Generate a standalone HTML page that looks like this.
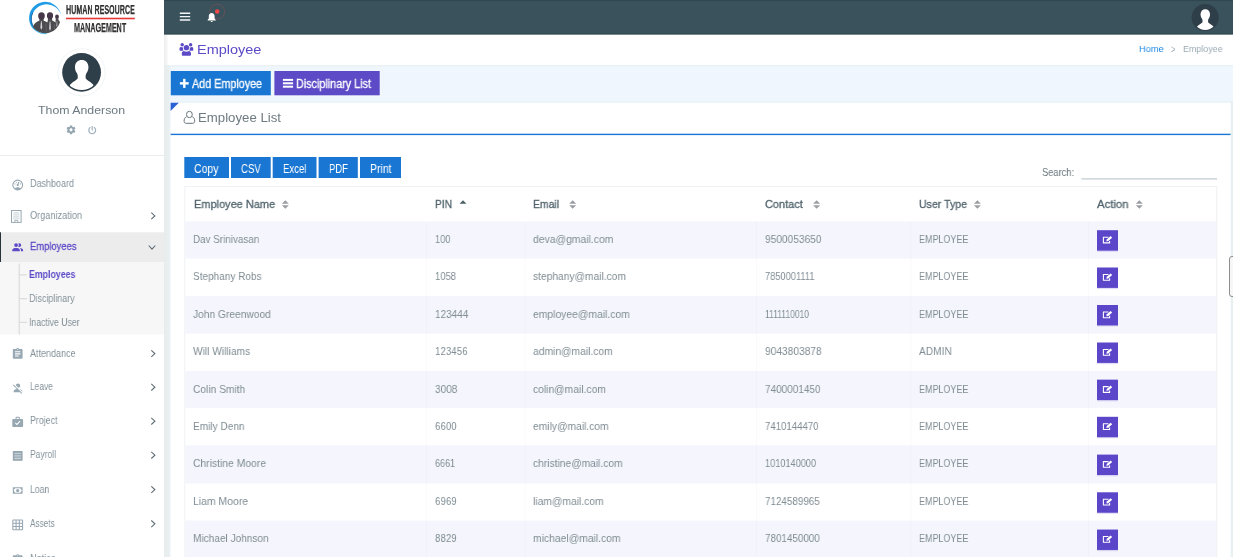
<!DOCTYPE html>
<html lang="en">
<head>
<meta charset="utf-8">
<title>Employee</title>
<style>
*{box-sizing:border-box;margin:0;padding:0}
html,body{width:1233px;height:557px;overflow:hidden}
body{font-family:"Liberation Sans",sans-serif;background:#eff6fd;color:#67757c;position:relative;font-size:12px}
div,svg{position:absolute}
.t{will-change:transform;position:absolute;white-space:pre;line-height:1;transform-origin:0 50%;display:block}

</style>
</head>
<body>
<svg style="left:0;top:0;width:1233px;height:557px" viewBox="0 0 1233 557">
<defs><linearGradient id="sh" x1="0" x2="1" y1="0" y2="0"><stop offset="0" stop-color="#979241" stop-opacity=".09"/><stop offset=".62" stop-color="#979241" stop-opacity=".075"/><stop offset="1" stop-color="#979241" stop-opacity="0"/></linearGradient><linearGradient id="sh2" x1="0" x2="1" y1="0" y2="0"><stop offset="0" stop-color="#000" stop-opacity=".07"/><stop offset=".6" stop-color="#000" stop-opacity=".04"/><stop offset="1" stop-color="#000" stop-opacity="0"/></linearGradient></defs>
<rect x="164" y="0" width="1069" height="34.7" fill="#39525b"/>
<rect x="164" y="0" width="1069" height="1" fill="#31474f"/>
<rect x="164" y="33.5" width="1069" height="1.2" fill="#2f464e"/>
<rect x="164" y="34.7" width="1069" height="30.3" fill="#fff"/>
<rect x="164" y="34.7" width="4.5" height="30.3" fill="url(#sh2)"/>
<rect x="164" y="65" width="7" height="493" fill="url(#sh)"/>
<rect x="0" y="0" width="164" height="557" fill="#fff"/>
<rect x="0" y="155" width="164" height="1" fill="#e9edf0"/>
<rect x="0" y="232.3" width="164" height="29.8" fill="#ececec"/>
<rect x="0" y="232.3" width="1" height="29.8" fill="#263238"/>
<rect x="0" y="262.1" width="164" height="72.4" fill="#f7f7f7"/>
<rect x="18.7" y="263.5" width="1" height="71" fill="#d6d6d6"/>
<rect x="19" y="274.4" width="8" height="1" fill="#d6d6d6"/>
<rect x="19" y="298.2" width="8" height="1" fill="#d6d6d6"/>
<rect x="19" y="321.8" width="8" height="1" fill="#d6d6d6"/>
<rect x="171" y="65" width="1062" height="1.5" fill="#e9f1f3" fill-opacity=".8"/>
<rect x="171" y="101.3" width="1060" height="1.5" fill="#e9f1f3" fill-opacity=".8"/>
<rect x="1230.8" y="101.3" width="2.2" height="460" fill="#e8eff1"/>
<rect x="170.8" y="71" width="100" height="24.3" fill="#1976d2"/>
<rect x="274.4" y="71" width="105.3" height="24.3" fill="#5c4ac7"/>
<rect x="170.6" y="102.8" width="1060" height="460" fill="#fff"/>
<path d="M170.6 102.8h8.2l-8.2 8.2z" fill="#2a62d6"/>
<rect x="170.6" y="133.7" width="1060" height="1.4" fill="#1976d2"/>
<rect x="184.3" y="157" width="44.7" height="21" fill="#1976d2"/>
<rect x="231" y="157" width="39.7" height="21" fill="#1976d2"/>
<rect x="272.7" y="157" width="43.8" height="21" fill="#1976d2"/>
<rect x="318.6" y="157" width="39.2" height="21" fill="#1976d2"/>
<rect x="360" y="157" width="41" height="21" fill="#1976d2"/>
<rect x="1081.4" y="178.4" width="135.6" height="1" fill="#b1bec4"/>
<rect x="184.8" y="186.5" width="1031.9" height="380" fill="#fff" stroke="#f0f1f4" stroke-width="1"/>
<rect x="185.3" y="221.3" width="1030.9" height="37.3" fill="#f5f6fd"/>
<rect x="185.3" y="295.9" width="1030.9" height="37.7" fill="#f5f6fd"/>
<rect x="185.3" y="370.9" width="1030.9" height="37" fill="#f5f6fd"/>
<rect x="185.3" y="445.2" width="1030.9" height="38.3" fill="#f5f6fd"/>
<rect x="185.3" y="520.6" width="1030.9" height="37.4" fill="#f5f6fd"/>
<rect x="426" y="221.3" width="1" height="345" fill="#788290" fill-opacity=".04"/>
<rect x="524.6" y="221.3" width="1" height="345" fill="#788290" fill-opacity=".04"/>
<rect x="756" y="221.3" width="1" height="345" fill="#788290" fill-opacity=".04"/>
<rect x="910.3" y="221.3" width="1" height="345" fill="#788290" fill-opacity=".04"/>
<rect x="1088" y="221.3" width="1" height="345" fill="#788290" fill-opacity=".04"/>
<rect x="1097" y="231.6" width="21" height="20.4" fill="#5b45c8" fill-opacity=".13" rx="1"/>
<rect x="1097" y="230.8" width="21" height="20.4" fill="#5b45c8" fill-opacity=".13"/>
<rect x="1097" y="230.2" width="21" height="20.4" fill="#5b45c8"/>
<rect x="1097" y="268.9" width="21" height="20.4" fill="#5b45c8" fill-opacity=".13" rx="1"/>
<rect x="1097" y="268.1" width="21" height="20.4" fill="#5b45c8" fill-opacity=".13"/>
<rect x="1097" y="267.5" width="21" height="20.4" fill="#5b45c8"/>
<rect x="1097" y="306.4" width="21" height="20.4" fill="#5b45c8" fill-opacity=".13" rx="1"/>
<rect x="1097" y="305.6" width="21" height="20.4" fill="#5b45c8" fill-opacity=".13"/>
<rect x="1097" y="305" width="21" height="20.4" fill="#5b45c8"/>
<rect x="1097" y="343.9" width="21" height="20.4" fill="#5b45c8" fill-opacity=".13" rx="1"/>
<rect x="1097" y="343.1" width="21" height="20.4" fill="#5b45c8" fill-opacity=".13"/>
<rect x="1097" y="342.5" width="21" height="20.4" fill="#5b45c8"/>
<rect x="1097" y="381.05" width="21" height="20.4" fill="#5b45c8" fill-opacity=".13" rx="1"/>
<rect x="1097" y="380.25" width="21" height="20.4" fill="#5b45c8" fill-opacity=".13"/>
<rect x="1097" y="379.65" width="21" height="20.4" fill="#5b45c8"/>
<rect x="1097" y="418.2" width="21" height="20.4" fill="#5b45c8" fill-opacity=".13" rx="1"/>
<rect x="1097" y="417.4" width="21" height="20.4" fill="#5b45c8" fill-opacity=".13"/>
<rect x="1097" y="416.8" width="21" height="20.4" fill="#5b45c8"/>
<rect x="1097" y="456" width="21" height="20.4" fill="#5b45c8" fill-opacity=".13" rx="1"/>
<rect x="1097" y="455.2" width="21" height="20.4" fill="#5b45c8" fill-opacity=".13"/>
<rect x="1097" y="454.6" width="21" height="20.4" fill="#5b45c8"/>
<rect x="1097" y="493.7" width="21" height="20.4" fill="#5b45c8" fill-opacity=".13" rx="1"/>
<rect x="1097" y="492.9" width="21" height="20.4" fill="#5b45c8" fill-opacity=".13"/>
<rect x="1097" y="492.3" width="21" height="20.4" fill="#5b45c8"/>
<rect x="1097" y="530.95" width="21" height="20.4" fill="#5b45c8" fill-opacity=".13" rx="1"/>
<rect x="1097" y="530.15" width="21" height="20.4" fill="#5b45c8" fill-opacity=".13"/>
<rect x="1097" y="529.55" width="21" height="20.4" fill="#5b45c8"/>
</svg>

<svg style="left:0;top:0;width:1233px;height:557px" viewBox="0 0 1233 557">
<rect x="66" y="17.7" width="68.8" height="1.6" fill="#e53935"/>
<rect x="179.9" y="82.15" width="8.8" height="2.4" fill="#fff"/>
<rect x="183.1" y="78.8" width="2.4" height="9.1" fill="#fff"/>
<rect x="282.9" y="78.9" width="10.2" height="2" fill="#fff"/>
<rect x="282.9" y="82.3" width="10.2" height="2" fill="#fff"/>
<rect x="282.9" y="85.7" width="10.2" height="2" fill="#fff"/>
</svg>
<!-- logo -->
<svg style="left:27px;top:0;width:38px;height:36px" viewBox="27 0 38 36">
<defs><clipPath id="lc"><circle cx="45.2" cy="17.9" r="15.3"/></clipPath></defs>
<path d="M61.1 15.6A16.1 16.1 0 1 0 46.5 34A14.9 14.9 0 1 1 61.1 15.6Z" fill="#1f9ce4"/>
<path d="M33 26.5A14.5 14.5 0 0 0 47 33.7" fill="none" stroke="#59c6f2" stroke-width="1"/>
<path d="M32.8 12.5A13.8 13.8 0 0 0 34.8 28.5" fill="none" stroke="#1d4f8c" stroke-width=".7"/>
<g clip-path="url(#lc)">
<path fill="#4b4b4f" d="M32.5 29C33 25 35.5 21.8 39.3 20.8L39.5 18H43.5L43.7 20.8C45.3 21.2 46.5 21.8 47.3 22.6L47.8 20.5L48 18H52L52.2 20.5C53.8 21 54.8 21.8 55.4 22.8L55.8 18.5H58.3L58.5 20C60.3 21.5 61 24.5 60.8 28C59 32 53 35 47 34.5C40 34.5 35 33 32.5 29Z"/>
<ellipse cx="41.5" cy="15.9" rx="3.3" ry="3.6" fill="#47374b"/>
<ellipse cx="50" cy="15.7" rx="3.1" ry="3.4" fill="#47374b"/>
<ellipse cx="57" cy="16.7" rx="1.9" ry="2.2" fill="#47374b"/>
<path d="M41 21.2l-.7 6.5 1.2 2 .8-2.2-.5-6.3zM49.6 21.5l-.5 7 .9 2.5 .9-2.5-.5-7zM56.8 21l-.4 4.5.5 1.5.5-1.5-.2-4.5z" fill="#cfcfd6"/>
<path d="M45.8 23.5l.6 9M54.3 24l.4 7" stroke="#77777c" stroke-width=".5"/>
</g>
</svg>
<!-- avatar sidebar -->
<svg style="left:56px;top:46px;width:52px;height:52px" viewBox="0 0 52 52">
<circle cx="25.6" cy="26.3" r="23.6" fill="none" stroke="#f1f5f7" stroke-width="1"/>
<defs><clipPath id="ac"><circle cx="25.6" cy="26.3" r="17.8"/></clipPath></defs>
<circle cx="25.6" cy="26.3" r="19.4" fill="#2f3f49"/>
<g clip-path="url(#ac)" fill="#fff">
<path d="M25.7 14.1C21.8 14.1 19.3 16.6 19 20.5C18.8 23 19.6 25.4 20.8 27C21.6 28.2 21.9 29.6 21.7 32.2C21.5 33.6 17.5 35.2 14.2 38.5L12 50H39.4L37.2 38.5C33.9 35.2 29.9 33.6 29.7 32.2C29.5 29.6 29.8 28.2 30.6 27C31.8 25.4 32.6 23 32.4 20.5C32.1 16.6 29.6 14.1 25.7 14.1Z"/>
</g>
</svg>
<!-- gear -->
<svg style="left:65px;top:124px;width:12px;height:12px" viewBox="-1.548 -1.121 26.916 26.916"><path fill="#94a5b0" d="M19.430 12.980c.040-.32.070-.64.070-.98s-.03-.66-.07-.98l2.110-1.650c.190-.15.240-.42.120-.64l-2-3.460c-.12-.22-.39-.3-.61-.22l-2.490 1c-.52-.4-1.080-.73-1.690-.98l-.38-2.650C14.460 2.180 14.250 2 14 2h-4c-.25 0-.46.180-.49.420l-.38 2.650c-.61.250-1.170.59-1.690.98l-2.490-1c-.23-.09-.49 0-.61.220l-2 3.460c-.13.220-.07.490.12.640l2.110 1.650c-.4.320-.7.650-.7.980s.3.660.7.980l-2.110 1.650c-.19.150-.24.420-.12.640l2 3.460c.12.220.39.3.61.220l2.490-1c.52.4 1.080.73 1.690.98l.38 2.650c.3.240.24.420.49.420h4c.25 0 .46-.18.490-.42l.38-2.650c.61-.25 1.170-.59 1.690-.98l2.490 1c.23.090.49 0 .61-.22l2-3.460c.12-.22.070-.49-.12-.64l-2.110-1.650zM12 15.5c-1.930 0-3.5-1.570-3.5-3.5s1.570-3.5 3.5-3.5 3.5 1.570 3.5 3.5-1.570 3.5-3.5 3.5z"/></svg>
<!-- power -->
<svg style="left:87px;top:124px;width:11px;height:11px" viewBox="0 0 11 11"><path d="M3.050 3.6A3.4 3.4 0 1 0 7.350 3.6" fill="none" stroke="#a3b3be" stroke-width="1.250" stroke-linecap="round"/><path d="M5.2 2.5V6.1" stroke="#a3b3be" stroke-width="1.2" stroke-linecap="round"/></svg>
<!-- sidebar menu icons -->
<svg style="left:11px;top:178px;width:14px;height:14px" viewBox="-0.369 -0.923 25.846 25.846"><path fill="#97a8b2" d="M12,2A10,10 0 0,0 2,12A10,10 0 0,0 12,22A10,10 0 0,0 22,12A10,10 0 0,0 12,2M12,4A8,8 0 0,1 20,12C20,14.4 19,16.5 17.3,18C15.9,16.7 14,16 12,16C10,16 8.2,16.7 6.7,18C5,16.5 4,14.4 4,12A8,8 0 0,1 12,4M14,5.89C13.62,5.9 13.26,6.15 13.1,6.54L11.81,9.77L11.71,10C11,10.13 10.41,10.6 10.14,11.26C9.73,12.29 10.23,13.45 11.26,13.86C12.29,14.27 13.45,13.77 13.86,12.74C14.12,12.08 14,11.32 13.57,10.76L13.67,10.5L14.96,7.29L14.97,7.26C15.17,6.75 14.92,6.17 14.41,5.96C14.28,5.91 14.15,5.89 14,5.89M10,6A1,1 0 0,0 9,7A1,1 0 0,0 10,8A1,1 0 0,0 11,7A1,1 0 0,0 10,6M7,9A1,1 0 0,0 6,10A1,1 0 0,0 7,11A1,1 0 0,0 8,10A1,1 0 0,0 7,9M17,9A1,1 0 0,0 16,10A1,1 0 0,0 17,11A1,1 0 0,0 18,10A1,1 0 0,0 17,9Z"/></svg>
<svg style="left:10px;top:209px;width:13px;height:15px" viewBox="0 0 13 15"><g fill="none" stroke="#97a8b2"><rect x="1.5" y="1.5" width="9.6" height="11.9" stroke-width="1"/><path stroke-width=".55" d="M3.3 3.9h6M3.3 5.9h6M3.3 7.9h6M3.3 9.9h6"/><path stroke-width=".8" d="M4.8 13.4v-1.9h3v1.9"/></g></svg>
<svg style="left:11px;top:241px;width:14px;height:13px" viewBox="-0.369 0 25.846 24"><path fill="#5c4ac7" d="M16 17V19H2V17S2 13 9 13 16 17 16 17M12.5 7.5A3.5 3.5 0 1 0 9 11A3.5 3.5 0 0 0 12.5 7.5M15.940 13A5.320 5.320 0 0 1 18 17V19H22V17S22 13.370 15.940 13M15 4A3.390 3.390 0 0 0 13.070 4.590A5 5 0 0 1 13.070 10.410A3.390 3.390 0 0 0 15 11A3.5 3.5 0 0 0 15 4Z"/></svg>
<svg style="left:11px;top:347px;width:14px;height:14px" viewBox="-0.369 -0.738 25.846 25.846"><path fill="#97a8b2" d="M17,9H7V7H17M17,13H7V11H17M14,17H7V15H14M12,3A1,1 0 0,1 13,4A1,1 0 0,1 12,5A1,1 0 0,1 11,4A1,1 0 0,1 12,3M19,3H14.820C14.4,1.840 13.3,1 12,1C10.7,1 9.6,1.840 9.180,3H5A2,2 0 0,0 3,5V19A2,2 0 0,0 5,21H19A2,2 0 0,0 21,19V5A2,2 0 0,0 19,3Z"/></svg>
<svg style="left:11px;top:381px;width:14px;height:14px" viewBox="-0.923 -0.738 25.846 25.846"><path fill="#97a8b2" d="M12,4A4,4 0 0,1 16,8C16,9.950 14.6,11.580 12.750,11.930L8.070,7.250C8.420,5.4 10.050,4 12,4M12.280,14L18.280,20L20,21.720L18.730,23L15.730,20H4V18C4,16.160 6.5,14.610 9.870,14.140L2.780,7.050L4.050,5.780L12.280,14M20,18V19.180L15.140,14.320C18,14.930 20,16.350 20,18Z"/></svg>
<svg style="left:11px;top:415px;width:14px;height:14px" viewBox="-0.369 -1.292 25.846 25.846"><path fill="#97a8b2" d="M10,2H14A2,2 0 0,1 16,4V6H20A2,2 0 0,1 22,8V19A2,2 0 0,1 20,21H4C2.890,21 2,20.1 2,19V8C2,6.890 2.890,6 4,6H8V4C8,2.890 8.890,2 10,2M14,6V4H10V6H14M10.5,17.5L17.090,10.910L15.680,9.5L10.5,14.670L8.410,12.590L7,14L10.5,17.5Z"/></svg>
<svg style="left:11px;top:449px;width:14px;height:14px" viewBox="-0.369 -0.738 25.846 25.846"><path fill="#97a8b2" d="M3 3h18v18H3z"/><path d="M6 6.5h12v2.2H6zM6 10.9h12v2.2H6zM6 15.3h12v2.2H6z" fill="#c9d2d7"/></svg>
<svg style="left:11px;top:484px;width:14px;height:13px" viewBox="-0.369 0 25.846 24"><path fill="#97a8b2" d="M3,6H21V18H3V6M12,9A3,3 0 0,1 15,12A3,3 0 0,1 12,15A3,3 0 0,1 9,12A3,3 0 0,1 12,9M7,8A2,2 0 0,1 5,10V14A2,2 0 0,1 7,16H17A2,2 0 0,1 19,14V10A2,2 0 0,1 17,8H7Z"/></svg>
<svg style="left:11px;top:518px;width:14px;height:14px" viewBox="-0.369 -0.738 25.846 25.846"><path fill="#97a8b2" d="M10,4V8H14V4H10M16,4V8H20V4H16M16,10V14H20V10H16M16,16V20H20V16H16M14,20V16H10V20H14M8,20V16H4V20H8M8,14V10H4V14H8M8,8V4H4V8H8M10,14H14V10H10V14M4,2H20A2,2 0 0,1 22,4V20A2,2 0 0,1 20,22H4C2.920,22 2,21.1 2,20V4A2,2 0 0,1 4,2Z"/></svg>
<svg style="left:11px;top:553px;width:14px;height:14px" viewBox="-0.369 -1.108 25.846 25.846"><path fill="#97a8b2" d="M19,3H14.820C14.4,1.840 13.3,1 12,1C10.7,1 9.6,1.840 9.180,3H5A2,2 0 0,0 3,5V19A2,2 0 0,0 5,21H19A2,2 0 0,0 21,19V5A2,2 0 0,0 19,3M12,3A1,1 0 0,1 13,4A1,1 0 0,1 12,5A1,1 0 0,1 11,4A1,1 0 0,1 12,3Z"/></svg>
<!-- chevrons -->
<svg style="left:148px;top:209px;width:10px;height:14px" viewBox="148 209 10 14"><path d="M151.3 212.6l3.6 3.3-3.6 3.3" fill="none" stroke="#5d6b73" stroke-width="1.1"/></svg>
<svg style="left:146px;top:242px;width:12px;height:10px" viewBox="146 242 12 10"><path d="M148.7 245.5l3.3 3.6 3.3-3.6" fill="none" stroke="#5d6b73" stroke-width="1.1"/></svg>
<svg style="left:148px;top:346px;width:10px;height:15px" viewBox="0 -0.6 10 15"><path d="M3.3 3.7l3.6 3.3-3.6 3.3" fill="none" stroke="#5d6b73" stroke-width="1.1"/></svg>
<svg style="left:148px;top:380px;width:10px;height:15px" viewBox="0 -0.2 10 15"><path d="M3.3 3.7l3.6 3.3-3.6 3.3" fill="none" stroke="#5d6b73" stroke-width="1.1"/></svg>
<svg style="left:148px;top:414px;width:10px;height:15px" viewBox="0 -0.2 10 15"><path d="M3.3 3.7l3.6 3.3-3.6 3.3" fill="none" stroke="#5d6b73" stroke-width="1.1"/></svg>
<svg style="left:148px;top:448px;width:10px;height:15px" viewBox="0 -0.2 10 15"><path d="M3.3 3.7l3.6 3.3-3.6 3.3" fill="none" stroke="#5d6b73" stroke-width="1.1"/></svg>
<svg style="left:148px;top:482px;width:10px;height:15px" viewBox="0 -0.6 10 15"><path d="M3.3 3.7l3.6 3.3-3.6 3.3" fill="none" stroke="#5d6b73" stroke-width="1.1"/></svg>
<svg style="left:148px;top:516px;width:10px;height:15px" viewBox="0 -0.8 10 15"><path d="M3.3 3.7l3.6 3.3-3.6 3.3" fill="none" stroke="#5d6b73" stroke-width="1.1"/></svg>
<!-- topbar icons -->
<svg style="left:178px;top:10px;width:14px;height:13px" viewBox="178 10 14 13"><path d="M179.8 13.2h10.4M179.8 16.6h10.4M179.8 19.9h10.4" stroke="#f4f6f7" stroke-width="1.450"/></svg>
<svg style="left:205px;top:2px;width:22px;height:22px" viewBox="205 2 22 22"><circle cx="217.2" cy="11.6" r="7.4" fill="none" stroke="#e8505a" stroke-opacity=".32" stroke-width=".8"/><path fill="#fff" d="M211.7 12.9c1.6 0 2.9 1.3 2.9 3.1v2.5l1.2 1.5v.5h-8.2v-.5l1.2-1.5v-2.5c0-1.8 1.3-3.1 2.9-3.1zM210.7 21h2c0 .6-.4 1-1 1s-1-.4-1-1z"/><circle cx="217.2" cy="11.6" r="2.250" fill="#f24848"/></svg>
<!-- topbar avatar -->
<svg style="left:1190px;top:2px;width:30px;height:30px" viewBox="1190 2 30 30">
<defs><clipPath id="tc"><circle cx="1205.2" cy="17.5" r="12.4"/></clipPath></defs>
<circle cx="1205.2" cy="17.5" r="13.6" fill="#2f3f49"/>
<g clip-path="url(#tc)" fill="#fff"><path transform="translate(1187.3 -.5) scale(.7)" d="M25.7 14.1C21.8 14.1 19.3 16.6 19 20.5C18.8 23 19.6 25.4 20.8 27C21.6 28.2 21.9 29.6 21.7 32.2C21.5 33.6 17.5 35.2 14.2 38.5L12 50H39.4L37.2 38.5C33.9 35.2 29.9 33.6 29.7 32.2C29.5 29.6 29.8 28.2 30.6 27C31.8 25.4 32.6 23 32.4 20.5C32.1 16.6 29.6 14.1 25.7 14.1Z"/></g>
</svg>
<!-- title icon (users) -->
<svg style="left:179px;top:42px;width:15px;height:14px" viewBox="-0.5 -0.9 15 14"><g fill="#5c4ac7">
<circle cx="2.7" cy="1.9" r="1.750"/><circle cx="11.1" cy="1.9" r="1.750"/>
<path d="M0 7.2V5.8C0 4.6.7 4 1.6 4c.5.5 1.4.7 2.2.3C3.3 5.4 3.4 6.6 4 7.6L3.2 7.9H.8C.3 7.9 0 7.6 0 7.2Z"/>
<path d="M13.8 7.2V5.8c0-1.2-.7-1.8-1.6-1.8-.5.5-1.4.7-2.2.3.5 1.1.4 2.3-.2 3.3l.8.3h2.4c.5 0 .8-.3.8-.7Z"/>
<circle cx="6.9" cy="4.8" r="2.650"/>
<path d="M2.3 11.6V10.6C2.3 9 3.3 8.1 4.5 8c1.4 1 3.4 1 4.8 0 1.2.1 2.2 1 2.2 2.6v1c0 .8-.5 1.3-1.3 1.3H3.6c-.8 0-1.3-.5-1.3-1.3Z"/>
</g></svg>
<!-- button icons -->
<!-- card header user icon -->
<svg style="left:182px;top:110px;width:14px;height:15px" viewBox="-0.9 -0.5 14 15"><g fill="none" stroke="#67757c" stroke-width="1"><ellipse cx="6.5" cy="4" rx="2.9" ry="3.2"/><path d="M3.6 6.3C1.8 7 1.2 8.7 1.2 10.8c0 1.3.8 2 2 2h6.6c1.2 0 2-.7 2-2 0-2.1-.6-3.8-2.4-4.5"/></g></svg>
<!-- sort icons -->
<svg style="left:281px;top:199px;width:8px;height:11px" viewBox="-0.8 -0.5 8 11"><path d="M0 4.2L3.5 .7 7 4.2Z" fill="#9b9fa3"/><path d="M0 5.8L3.5 9.3 7 5.8Z" fill="#9b9fa3"/></svg>
<svg style="left:459px;top:199px;width:8px;height:11px" viewBox="-0.5 -0.5 8 11"><path d="M0 4.2L3.5 .7 7 4.2Z" fill="#4d6069"/></svg>
<svg style="left:569px;top:199px;width:8px;height:11px" viewBox="-0.2 -0.5 8 11"><path d="M0 4.2L3.5 .7 7 4.2Z" fill="#9b9fa3"/><path d="M0 5.8L3.5 9.3 7 5.8Z" fill="#9b9fa3"/></svg>
<svg style="left:813px;top:199px;width:8px;height:11px" viewBox="-0.1 -0.5 8 11"><path d="M0 4.2L3.5 .7 7 4.2Z" fill="#9b9fa3"/><path d="M0 5.8L3.5 9.3 7 5.8Z" fill="#9b9fa3"/></svg>
<svg style="left:973px;top:199px;width:8px;height:11px" viewBox="-0.9 -0.5 8 11"><path d="M0 4.2L3.5 .7 7 4.2Z" fill="#9b9fa3"/><path d="M0 5.8L3.5 9.3 7 5.8Z" fill="#9b9fa3"/></svg>
<svg style="left:1135px;top:199px;width:8px;height:11px" viewBox="-0.8 -0.5 8 11"><path d="M0 4.2L3.5 .7 7 4.2Z" fill="#9b9fa3"/><path d="M0 5.8L3.5 9.3 7 5.8Z" fill="#9b9fa3"/></svg>
<!-- edit icons -->
<svg style="left:1102px;top:235px;width:12px;height:10px" viewBox="-0.3 -0.8 12 10"><path d="M6.2 1.4H1.1V7.1H7.3V5.2" fill="none" stroke="#fff" stroke-width="1.1"/><path d="M4 5.6L4.5 3.7 8.3.3 9.9 1.9 6 5.3Z" fill="#fff"/></svg>
<svg style="left:1102px;top:273px;width:12px;height:10px" viewBox="-0.3 -0.1 12 10"><path d="M6.2 1.4H1.1V7.1H7.3V5.2" fill="none" stroke="#fff" stroke-width="1.1"/><path d="M4 5.6L4.5 3.7 8.3.3 9.9 1.9 6 5.3Z" fill="#fff"/></svg>
<svg style="left:1102px;top:310px;width:12px;height:10px" viewBox="-0.3 -0.6 12 10"><path d="M6.2 1.4H1.1V7.1H7.3V5.2" fill="none" stroke="#fff" stroke-width="1.1"/><path d="M4 5.6L4.5 3.7 8.3.3 9.9 1.9 6 5.3Z" fill="#fff"/></svg>
<svg style="left:1102px;top:348px;width:12px;height:10px" viewBox="-0.3 -0.1 12 10"><path d="M6.2 1.4H1.1V7.1H7.3V5.2" fill="none" stroke="#fff" stroke-width="1.1"/><path d="M4 5.6L4.5 3.7 8.3.3 9.9 1.9 6 5.3Z" fill="#fff"/></svg>
<svg style="left:1102px;top:385px;width:12px;height:10px" viewBox="-0.3 -0.25 12 10"><path d="M6.2 1.4H1.1V7.1H7.3V5.2" fill="none" stroke="#fff" stroke-width="1.1"/><path d="M4 5.6L4.5 3.7 8.3.3 9.9 1.9 6 5.3Z" fill="#fff"/></svg>
<svg style="left:1102px;top:422px;width:12px;height:10px" viewBox="-0.3 -0.4 12 10"><path d="M6.2 1.4H1.1V7.1H7.3V5.2" fill="none" stroke="#fff" stroke-width="1.1"/><path d="M4 5.6L4.5 3.7 8.3.3 9.9 1.9 6 5.3Z" fill="#fff"/></svg>
<svg style="left:1102px;top:460px;width:12px;height:10px" viewBox="-0.3 -0.2 12 10"><path d="M6.2 1.4H1.1V7.1H7.3V5.2" fill="none" stroke="#fff" stroke-width="1.1"/><path d="M4 5.6L4.5 3.7 8.3.3 9.9 1.9 6 5.3Z" fill="#fff"/></svg>
<svg style="left:1102px;top:497px;width:12px;height:10px" viewBox="-0.3 -0.9 12 10"><path d="M6.2 1.4H1.1V7.1H7.3V5.2" fill="none" stroke="#fff" stroke-width="1.1"/><path d="M4 5.6L4.5 3.7 8.3.3 9.9 1.9 6 5.3Z" fill="#fff"/></svg>
<svg style="left:1102px;top:535px;width:12px;height:10px" viewBox="-0.3 -0.15 12 10"><path d="M6.2 1.4H1.1V7.1H7.3V5.2" fill="none" stroke="#fff" stroke-width="1.1"/><path d="M4 5.6L4.5 3.7 8.3.3 9.9 1.9 6 5.3Z" fill="#fff"/></svg>
<!-- right tab -->
<div style="left:1229.4px;top:256.4px;width:8px;height:41px;border:1px solid #8d8d8d;border-radius:3px 0 0 3px;background:#f7f7f7"></div>

<nav>
<span class="t" style="left:66.0px;top:3.6px;font-size:12.8px;color:#303030;transform:scaleX(0.556);font-weight:bold;-webkit-text-stroke:.25px currentColor">HUMAN RESOURCE</span>
<span class="t" style="left:73.7px;top:21.6px;font-size:12.3px;color:#303030;transform:scaleX(0.583);font-weight:bold;-webkit-text-stroke:.25px currentColor">MANAGEMENT</span>
<span class="t" style="left:38.1px;top:104.5px;font-size:11.3px;color:#6b7980;transform:scaleX(1.091)">Thom Anderson</span>
<span class="t" style="left:30.0px;top:178.2px;font-size:11px;color:#84929a;transform:scaleX(0.817)">Dashboard</span>
<span class="t" style="left:30.0px;top:210.3px;font-size:11px;color:#84929a;transform:scaleX(0.834)">Organization</span>
<span class="t" style="left:30.0px;top:241.0px;font-size:11.5px;color:#5c4ac7;transform:scaleX(0.816);-webkit-text-stroke:.3px currentColor">Employees</span>
<span class="t" style="left:29.0px;top:269.4px;font-size:11px;color:#5c4ac7;transform:scaleX(0.799);font-weight:bold">Employees</span>
<span class="t" style="left:29.0px;top:292.9px;font-size:11px;color:#84929a;transform:scaleX(0.811)">Disciplinary</span>
<span class="t" style="left:29.0px;top:316.6px;font-size:11px;color:#84929a;transform:scaleX(0.788)">Inactive User</span>
<span class="t" style="left:30.0px;top:347.6px;font-size:11px;color:#84929a;transform:scaleX(0.819)">Attendance</span>
<span class="t" style="left:30.0px;top:381.4px;font-size:11px;color:#84929a;transform:scaleX(0.767)">Leave</span>
<span class="t" style="left:30.0px;top:415.2px;font-size:11px;color:#84929a;transform:scaleX(0.803)">Project</span>
<span class="t" style="left:30.0px;top:449.2px;font-size:11px;color:#84929a;transform:scaleX(0.773)">Payroll</span>
<span class="t" style="left:30.0px;top:483.6px;font-size:11px;color:#84929a;transform:scaleX(0.792)">Loan</span>
<span class="t" style="left:30.0px;top:517.8px;font-size:11px;color:#84929a;transform:scaleX(0.748)">Assets</span>
<span class="t" style="left:30.0px;top:553.2px;font-size:11px;color:#84929a;transform:scaleX(0.830)">Notice</span>
</nav>
<header>
<span class="t" style="left:197.1px;top:43.2px;font-size:13px;color:#5c4ac7;transform:scaleX(1.114)">Employee</span>
<span class="t" style="left:1139.3px;top:44.2px;font-size:9.7px;color:#1e88e5;transform:scaleX(0.952)">Home</span>
<span class="t" style="left:1171.2px;top:43.9px;font-size:11px;color:#99abb4;transform:scaleX(0.683)">&gt;</span>
<span class="t" style="left:1182.6px;top:44.2px;font-size:9.7px;color:#99abb4;transform:scaleX(0.919)">Employee</span>
</header>
<main>
<span class="t" style="left:191.8px;top:77.7px;font-size:12px;color:#fff;transform:scaleX(0.898);-webkit-text-stroke:.3px currentColor">Add Employee</span>
<span class="t" style="left:296.3px;top:77.7px;font-size:12px;color:#fff;transform:scaleX(0.899);-webkit-text-stroke:.3px currentColor">Disciplinary List</span>
<span class="t" style="left:198.3px;top:112.0px;font-size:12px;color:#6d7a81;transform:scaleX(1.101)">Employee List</span>
<span class="t" style="left:194.2px;top:163.3px;font-size:12px;color:#fff;transform:scaleX(0.875)">Copy</span>
<span class="t" style="left:241.0px;top:163.3px;font-size:12px;color:#fff;transform:scaleX(0.798)">CSV</span>
<span class="t" style="left:283.0px;top:163.3px;font-size:12px;color:#fff;transform:scaleX(0.797)">Excel</span>
<span class="t" style="left:329.0px;top:163.3px;font-size:12px;color:#fff;transform:scaleX(0.783)">PDF</span>
<span class="t" style="left:369.8px;top:163.3px;font-size:12px;color:#fff;transform:scaleX(0.875)">Print</span>
<span class="t" style="left:1041.6px;top:166.6px;font-size:11.5px;color:#67757c;transform:scaleX(0.810)">Search:</span>
<span class="t" style="left:193.6px;top:198.2px;font-size:11.6px;color:#50636c;transform:scaleX(0.947);-webkit-text-stroke:.3px currentColor">Employee Name</span>
<span class="t" style="left:435.0px;top:198.2px;font-size:11.6px;color:#50636c;transform:scaleX(0.880);-webkit-text-stroke:.3px currentColor">PIN</span>
<span class="t" style="left:533.0px;top:198.2px;font-size:11.6px;color:#50636c;transform:scaleX(0.897);-webkit-text-stroke:.3px currentColor">Email</span>
<span class="t" style="left:765.0px;top:198.2px;font-size:11.6px;color:#50636c;transform:scaleX(0.946);-webkit-text-stroke:.3px currentColor">Contact</span>
<span class="t" style="left:918.8px;top:198.2px;font-size:11.6px;color:#50636c;transform:scaleX(0.912);-webkit-text-stroke:.3px currentColor">User Type</span>
<span class="t" style="left:1097.3px;top:198.2px;font-size:11.6px;color:#50636c;transform:scaleX(0.980);-webkit-text-stroke:.3px currentColor">Action</span>
<span class="t" style="left:193.4px;top:233.0px;font-size:11.6px;color:#7f8c93;transform:scaleX(0.851)">Dav Srinivasan</span>
<span class="t" style="left:435.2px;top:233.0px;font-size:11.6px;color:#7f8c93;transform:scaleX(0.796)">100</span>
<span class="t" style="left:533.3px;top:233.0px;font-size:11.6px;color:#7f8c93;transform:scaleX(0.896)">deva@gmail.com</span>
<span class="t" style="left:765.2px;top:233.0px;font-size:11.6px;color:#7f8c93;transform:scaleX(0.876)">9500053650</span>
<span class="t" style="left:919.0px;top:233.0px;font-size:11.6px;color:#7f8c93;transform:scaleX(0.774)">EMPLOYEE</span>
<span class="t" style="left:193.4px;top:270.4px;font-size:11.6px;color:#7f8c93;transform:scaleX(0.865)">Stephany Robs</span>
<span class="t" style="left:435.2px;top:270.4px;font-size:11.6px;color:#7f8c93;transform:scaleX(0.814)">1058</span>
<span class="t" style="left:533.3px;top:270.4px;font-size:11.6px;color:#7f8c93;transform:scaleX(0.884)">stephany@mail.com</span>
<span class="t" style="left:765.2px;top:270.4px;font-size:11.6px;color:#7f8c93;transform:scaleX(0.800)">7850001111</span>
<span class="t" style="left:919.0px;top:270.4px;font-size:11.6px;color:#7f8c93;transform:scaleX(0.774)">EMPLOYEE</span>
<span class="t" style="left:193.4px;top:307.8px;font-size:11.6px;color:#7f8c93;transform:scaleX(0.881)">John Greenwood</span>
<span class="t" style="left:435.2px;top:307.8px;font-size:11.6px;color:#7f8c93;transform:scaleX(0.861)">123444</span>
<span class="t" style="left:533.3px;top:307.8px;font-size:11.6px;color:#7f8c93;transform:scaleX(0.893)">employee@mail.com</span>
<span class="t" style="left:765.2px;top:307.8px;font-size:11.6px;color:#7f8c93;transform:scaleX(0.731)">1111110010</span>
<span class="t" style="left:919.0px;top:307.8px;font-size:11.6px;color:#7f8c93;transform:scaleX(0.774)">EMPLOYEE</span>
<span class="t" style="left:193.4px;top:345.2px;font-size:11.6px;color:#7f8c93;transform:scaleX(0.879)">Will Williams</span>
<span class="t" style="left:435.2px;top:345.2px;font-size:11.6px;color:#7f8c93;transform:scaleX(0.843)">123456</span>
<span class="t" style="left:533.3px;top:345.2px;font-size:11.6px;color:#7f8c93;transform:scaleX(0.889)">admin@mail.com</span>
<span class="t" style="left:765.2px;top:345.2px;font-size:11.6px;color:#7f8c93;transform:scaleX(0.879)">9043803878</span>
<span class="t" style="left:919.0px;top:345.2px;font-size:11.6px;color:#7f8c93;transform:scaleX(0.878)">ADMIN</span>
<span class="t" style="left:193.4px;top:382.6px;font-size:11.6px;color:#7f8c93;transform:scaleX(0.882)">Colin Smith</span>
<span class="t" style="left:435.2px;top:382.6px;font-size:11.6px;color:#7f8c93;transform:scaleX(0.868)">3008</span>
<span class="t" style="left:533.3px;top:382.6px;font-size:11.6px;color:#7f8c93;transform:scaleX(0.890)">colin@mail.com</span>
<span class="t" style="left:765.2px;top:382.6px;font-size:11.6px;color:#7f8c93;transform:scaleX(0.861)">7400001450</span>
<span class="t" style="left:919.0px;top:382.6px;font-size:11.6px;color:#7f8c93;transform:scaleX(0.774)">EMPLOYEE</span>
<span class="t" style="left:193.4px;top:420.0px;font-size:11.6px;color:#7f8c93;transform:scaleX(0.870)">Emily Denn</span>
<span class="t" style="left:435.2px;top:420.0px;font-size:11.6px;color:#7f8c93;transform:scaleX(0.841)">6600</span>
<span class="t" style="left:533.3px;top:420.0px;font-size:11.6px;color:#7f8c93;transform:scaleX(0.888)">emily@mail.com</span>
<span class="t" style="left:765.2px;top:420.0px;font-size:11.6px;color:#7f8c93;transform:scaleX(0.830)">7410144470</span>
<span class="t" style="left:919.0px;top:420.0px;font-size:11.6px;color:#7f8c93;transform:scaleX(0.774)">EMPLOYEE</span>
<span class="t" style="left:193.4px;top:457.4px;font-size:11.6px;color:#7f8c93;transform:scaleX(0.892)">Christine Moore</span>
<span class="t" style="left:435.2px;top:457.4px;font-size:11.6px;color:#7f8c93;transform:scaleX(0.779)">6661</span>
<span class="t" style="left:533.3px;top:457.4px;font-size:11.6px;color:#7f8c93;transform:scaleX(0.884)">christine@mail.com</span>
<span class="t" style="left:765.2px;top:457.4px;font-size:11.6px;color:#7f8c93;transform:scaleX(0.792)">1010140000</span>
<span class="t" style="left:919.0px;top:457.4px;font-size:11.6px;color:#7f8c93;transform:scaleX(0.774)">EMPLOYEE</span>
<span class="t" style="left:193.4px;top:494.8px;font-size:11.6px;color:#7f8c93;transform:scaleX(0.900)">Liam Moore</span>
<span class="t" style="left:435.2px;top:494.8px;font-size:11.6px;color:#7f8c93;transform:scaleX(0.841)">6969</span>
<span class="t" style="left:533.3px;top:494.8px;font-size:11.6px;color:#7f8c93;transform:scaleX(0.889)">liam@mail.com</span>
<span class="t" style="left:765.2px;top:494.8px;font-size:11.6px;color:#7f8c93;transform:scaleX(0.850)">7124589965</span>
<span class="t" style="left:919.0px;top:494.8px;font-size:11.6px;color:#7f8c93;transform:scaleX(0.774)">EMPLOYEE</span>
<span class="t" style="left:193.4px;top:532.2px;font-size:11.6px;color:#7f8c93;transform:scaleX(0.870)">Michael Johnson</span>
<span class="t" style="left:435.2px;top:532.2px;font-size:11.6px;color:#7f8c93;transform:scaleX(0.841)">8829</span>
<span class="t" style="left:533.3px;top:532.2px;font-size:11.6px;color:#7f8c93;transform:scaleX(0.892)">michael@mail.com</span>
<span class="t" style="left:765.2px;top:532.2px;font-size:11.6px;color:#7f8c93;transform:scaleX(0.850)">7801450000</span>
<span class="t" style="left:919.0px;top:532.2px;font-size:11.6px;color:#7f8c93;transform:scaleX(0.774)">EMPLOYEE</span>
</main>
</body>
</html>
